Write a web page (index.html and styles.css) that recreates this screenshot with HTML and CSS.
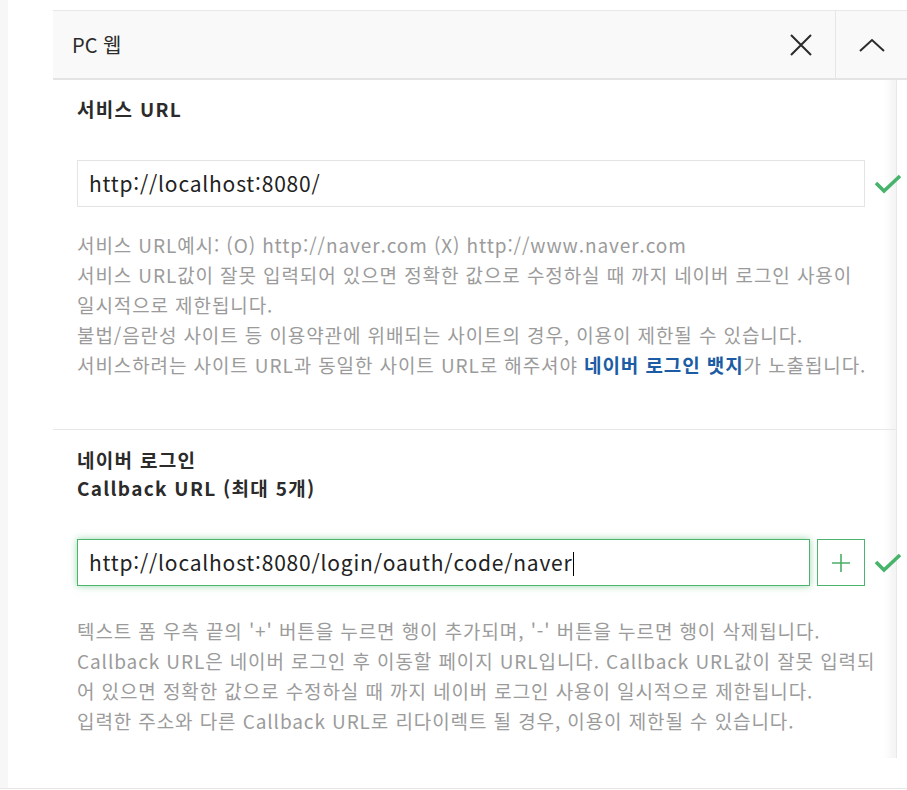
FILE: index.html
```html
<!DOCTYPE html>
<html lang="ko">
<head>
  <meta charset="UTF-8">
  <meta name="viewport" content="width=device-width, initial-scale=1.0">
  <title>PC 웹 설정</title>
  <link rel="stylesheet" href="styles.css">
</head>
<body>
  <div class="page">
    <div class="side"></div>
    <div class="main">
      <div class="env-head">
        <div class="env-title">PC 웹</div>
        <button class="head-btn close-btn" title="삭제">
          <svg width="24" height="24" viewBox="0 0 24 24"><path d="M2 2 L22 22 M22 2 L2 22" stroke="#2b2b2b" stroke-width="2" fill="none"/></svg>
        </button>
        <button class="head-btn fold-btn" title="접기">
          <svg width="26" height="14" viewBox="0 0 26 14"><path d="M1 13 L13 2 L25 13" stroke="#2b2b2b" stroke-width="2" fill="none"/></svg>
        </button>
      </div>

      <div class="panel">
        <div class="field">
          <div class="field-title">서비스 URL</div>
          <div class="input-row">
            <div class="text-input">http://localhost:8080/</div>
            <span class="ok">
              <svg width="28" height="22" viewBox="0 0 28 22"><path d="M2 10 L10 18 L26 3" stroke="#47b36b" stroke-width="3.6" fill="none"/></svg>
            </span>
          </div>
          <p class="help">
            서비스 URL예시: (O) http://naver.com (X) http://www.naver.com<br>
            서비스 URL값이 잘못 입력되어 있으면 정확한 값으로 수정하실 때 까지 네이버 로그인 사용이<br>
            일시적으로 제한됩니다.<br>
            불법/음란성 사이트 등 이용약관에 위배되는 사이트의 경우, 이용이 제한될 수 있습니다.<br>
            서비스하려는 사이트 URL과 동일한 사이트 URL로 해주셔야 <a class="badge-link" href="#">네이버 로그인 뱃지</a>가 노출됩니다.
          </p>
        </div>

        <div class="field callback">
          <div class="field-title">네이버 로그인<br>Callback URL (최대 5개)</div>
          <div class="input-row">
            <div class="text-input focused">http://localhost:8080/login/oauth/code/naver<span class="caret"></span></div>
            <button class="add-btn">
              <svg width="20" height="20" viewBox="0 0 20 20"><path d="M10 1 V19 M1 10 H19" stroke="#4cae68" stroke-width="1.6" fill="none"/></svg>
            </button>
            <span class="ok">
              <svg width="28" height="22" viewBox="0 0 28 22"><path d="M2 10 L10 18 L26 3" stroke="#47b36b" stroke-width="3.6" fill="none"/></svg>
            </span>
          </div>
          <p class="help">
            텍스트 폼 우측 끝의 '+' 버튼을 누르면 행이 추가되며, '-' 버튼을 누르면 행이 삭제됩니다.<br>
            Callback URL은 네이버 로그인 후 이동할 페이지 URL입니다. Callback URL값이 잘못 입력되<br>
            어 있으면 정확한 값으로 수정하실 때 까지 네이버 로그인 사용이 일시적으로 제한됩니다.<br>
            입력한 주소와 다른 Callback URL로 리다이렉트 될 경우, 이용이 제한될 수 있습니다.
          </p>
        </div>
      </div>
    </div>
  </div>
</body>
</html>
```

FILE: styles.css
```css
body {
  margin: 0;
  padding: 0;
  background-color: #fff;
  font-family: "Noto Sans CJK KR", "Noto Sans", sans-serif;
  color: #333;
}
.page {
  display: flex;
  height: 789px;
  border-bottom: 1px solid #e6e6e6;
  box-sizing: border-box;
  overflow: hidden;
}
.side {
  flex-shrink: 0;
  width: 8px;
  background-color: #f7f7f7;
}
.main {
  flex: 1;
  min-width: 0;
  padding: 10px 0 0 45px;
}
.env-head {
  display: flex;
  align-items: center;
  height: 67px;
  background-color: #f9f9f9;
  border-top: 1px solid #e8e8e8;
  border-bottom: 2px solid #e4e4e4;
}
.env-title {
  flex: 1;
  padding-left: 19px;
  font-size: 20px;
  color: #2b2b2b;
}
.head-btn {
  height: 100%;
  border: none;
  background: none;
  padding: 0;
  cursor: pointer;
  display: flex;
  align-items: center;
  justify-content: center;
}
.close-btn {
  width: 68px;
}
.fold-btn {
  width: 72px;
  border-left: 1px solid #e6e6e6;
}
.panel {
  margin-right: 10px;
  border-right: 1px solid #e8e8e8;
  box-shadow: inset -14px 0 10px -8px rgba(0, 0, 0, 0.05);
  padding-bottom: 22px;
}
.field {
  padding: 15px 0 49px 24px;
}
.field.callback {
  border-top: 1px solid #e8e8e8;
  padding: 16px 0 0 24px;
}
.field-title {
  font-size: 19px;
  font-weight: bold;
  line-height: 28px;
  letter-spacing: 1.3px;
  color: #2b2b2b;
}
.input-row {
  display: flex;
  align-items: center;
  margin-top: 37px;
}
.text-input {
  flex-shrink: 0;
  width: 788px;
  height: 47px;
  box-sizing: border-box;
  border: 1px solid #e4e4e4;
  padding: 0 11px;
  font-size: 21px;
  letter-spacing: 0.8px;
  line-height: 45px;
  color: #222;
  white-space: nowrap;
  overflow: hidden;
}
.text-input.focused {
  width: 733px;
  border-color: #4cb46c;
  box-shadow: 0 0 7px rgba(76, 180, 108, 0.55);
}
.caret {
  display: inline-block;
  width: 1px;
  height: 24px;
  background-color: #000;
  vertical-align: middle;
  margin-top: -3px;
}
.add-btn {
  flex-shrink: 0;
  width: 48px;
  height: 47px;
  margin-left: 7px;
  border: 1px solid #4cb46c;
  background-color: #fff;
  padding: 0;
  display: flex;
  align-items: center;
  justify-content: center;
  cursor: pointer;
}
.ok {
  display: flex;
  flex-shrink: 0;
  margin-left: 9px;
  width: 28px;
}
.help {
  margin: 23px 0 0;
  font-size: 19px;
  letter-spacing: 0.9px;
  line-height: 30px;
  color: #9b9b9b;
}
.callback .help {
  margin-top: 30px;
}
.badge-link {
  color: #1c5ca4;
  font-weight: bold;
  text-decoration: none;
}
```
